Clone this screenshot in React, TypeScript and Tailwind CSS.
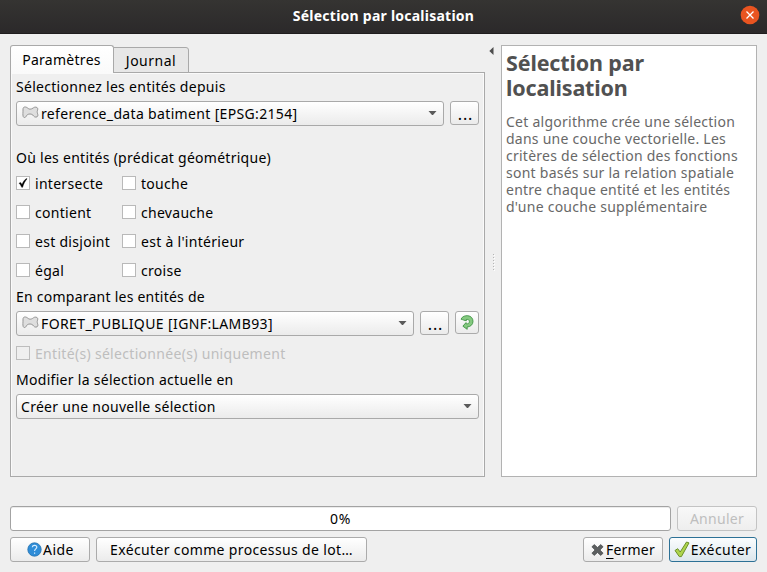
import type { ReactNode } from 'react';

const BTN =
  'flex items-center justify-center rounded-[3px] border border-[#ababab] bg-linear-to-b from-white to-[#ebebeb] whitespace-nowrap';

function Caret() {
  return (
    <svg width="9" height="6" viewBox="0 0 9 6" className="mb-px block shrink-0">
      <path d="M.5 1h8L5 5H4z" fill="#5b5b5b" />
    </svg>
  );
}

function Ellipsis() {
  return <span className="pt-px pl-[2px] text-[16px] tracking-[0.8px]">...</span>;
}

function PolygonIcon() {
  return (
    <svg width="17" height="13" viewBox="0 0 17 13" className="mr-[2px] mb-[2px] block shrink-0">
      <path
        d="M3.500 1C1.500.8.800 2 1 4c.1 2.500-.4 4.500.2 6.500.5 1.500 2.300 1.200 3-.2C4.800 8.700 6.200 8 8 8c1.700 0 2.700.7 3.600 2 1 1.500 3.700 1.500 4.200-.1.400-1.500-.7-2.600-.6-4.200.1-1.200.9-2.200.4-3.500C15 .9 12.800.8 11.600 1.700 10.300 2.700 9.300 3.200 8 3.200 6.200 3.200 5.500 1.200 3.500 1z"
        fill="#dedede"
        stroke="#959595"
      />
    </svg>
  );
}

function Combo({ width, icon, children }: { width: string; icon?: boolean; children: ReactNode }) {
  return (
    <div
      className={`flex h-[25px] items-center rounded-[3px] border border-[#a9a9a9] bg-linear-to-b from-white to-[#ebebeb] pr-[6px] ${icon ? 'pl-[5px]' : 'pl-[4px]'} ${width}`}
    >
      {icon && <PolygonIcon />}
      <span className="flex-1 whitespace-nowrap">{children}</span>
      <Caret />
    </div>
  );
}

function Check({ checked, disabled, children }: { checked?: boolean; disabled?: boolean; children: ReactNode }) {
  return (
    <div className={`flex h-[29px] items-start gap-[5px] pt-[5px] whitespace-nowrap ${disabled ? 'text-[#bebebe]' : ''}`}>
      <span
        className={`mt-[2px] flex h-[14px] w-[14px] shrink-0 items-center justify-center border ${disabled ? 'border-[#bdbdbd] bg-[#efefef]' : 'border-[#b9b9b9] bg-white'}`}
      >
        {checked && (
          <svg width="10" height="10" viewBox="0 0 10 10">
            <path d="M1 5.200 2.600 4.400 4 6.500C5 3.800 6.500 1.700 8.700.4L9 .9C7 3.200 5.500 6 4.600 9.300H3.700C3 7.500 2.200 6.200 1 5.200z" fill="#000" stroke="#000" strokeWidth=".4" />
          </svg>
        )}
      </span>
      <span>{children}</span>
    </div>
  );
}

export default function App() {
  return (
    <div className="flex h-[572px] w-[767px] flex-col overflow-hidden bg-[#efefef] font-['Noto_Sans',sans-serif] text-[14px] leading-[20px] tracking-[0.29px] text-black">
      <header className="grid h-[34px] shrink-0 grid-cols-[1fr_auto_1fr] items-center border-b border-[#1f1d1e] bg-linear-to-b from-[#353432] to-[#2b292a] text-white">
        <span />
        <h1 className="pb-[2px] font-bold tracking-[0.24px]">Sélection par localisation</h1>
        <svg width="20" height="20" viewBox="0 0 20 20" className="mr-[7px] -mt-[3px] justify-self-end">
          <circle cx="10" cy="10" r="9.300" fill="#e95420" />
          <path d="m6.500 6.500 7 7m0-7-7 7" stroke="#fff" strokeWidth="1.300" />
        </svg>
      </header>

      <div className="flex h-[443px] shrink-0 px-[10px] pt-[11px]">
        <section className="flex w-[475px] flex-col">
          <div className="z-10 -mb-px flex h-[28px] items-end">
            <div className="flex h-[28px] w-[104px] items-center justify-center rounded-t-[3px] border border-b-0 border-[#a9a9a9] bg-linear-to-b from-white to-[#fafafa] pt-px pr-px">
              Paramètres
            </div>
            <div className="-ml-px flex h-[26px] w-[76px] items-center justify-center rounded-tr-[3px] border border-[#a9a9a9] bg-[#e7e7e7] pt-px tracking-[0.5px]">
              Journal
            </div>
          </div>
          <div className="flex h-[405px] flex-col border border-[#a9a9a9] pr-[5px] pl-[5px] shadow-[inset_1px_1px_#fafafa,inset_-1px_0_#fafafa]">
            <div className="h-[28px] pt-[4px]">Sélectionnez les entités depuis</div>
            <div className="flex gap-[6px]">
              <Combo width="w-[428px] tracking-[0.34px]" icon>reference_data batiment [EPSG:2154]</Combo>
              <button className={`h-[24px] w-[29px] ${BTN}`}><Ellipsis /></button>
            </div>
            <div className="h-[43px] pt-[22px] tracking-[0.27px]">Où les entités (prédicat géométrique)</div>
            <div className="grid grid-cols-[106px_1fr]">
              <Check checked>intersecte</Check>
              <Check>touche</Check>
              <Check>contient</Check>
              <Check>chevauche</Check>
              <Check>est disjoint</Check>
              <Check>est à l'intérieur</Check>
              <Check>égal</Check>
              <Check>croise</Check>
            </div>
            <div className="h-[26px] pt-[2px] tracking-[0.24px]">En comparant les entités de</div>
            <div className="flex gap-[6px]">
              <Combo width="w-[398px] tracking-[0.39px]" icon>FORET_PUBLIQUE [IGNF:LAMB93]</Combo>
              <button className={`h-[24px] w-[29px] ${BTN}`}><Ellipsis /></button>
              <button className={`h-[23px] w-[24px] ${BTN}`}>
                <svg width="14" height="15" viewBox="0 0 14 15">
                  <path
                    d="M1 4.200C2.300 1.300 5.200.500 7.800.700 11 1 13 3.400 13 6.300c0 3.300-2.500 5.500-5.900 5.700l.1 2.300L2.900 11.200 6 7.600l.3 1.300c2 .1 3.100-.9 3.100-2.300 0-1.700-1.500-2.500-3.200-2.100l.2 1.200C4.600 5.700 2.700 4.500 1 4.200z"
                    fill="#85c980"
                    stroke="#3f9444"
                    strokeWidth=".9"
                    strokeLinejoin="round"
                  />
                </svg>
              </button>
            </div>
            <div className="h-[34px] pt-[3px] tracking-[0.31px]">
              <Check disabled>Entité(s) sélectionnée(s) uniquement</Check>
            </div>
            <div className="h-[24px]">Modifier la sélection actuelle en</div>
            <Combo width="w-[463px]">Créer une nouvelle sélection</Combo>
          </div>
        </section>

        <div className="flex w-[16px] shrink-0 flex-col items-center">
          <svg width="5" height="8" viewBox="0 0 5 8" className="mt-[2px] ml-[4px] self-start">
            <path d="M4.500 0v8L.3 4z" fill="#4d4d4d" />
          </svg>
          <div className="mt-[199px] flex flex-col gap-[2px]">
            {[0, 1, 2, 3, 4, 5].map((n) => (
              <i key={n} className="block h-px w-px bg-[#b5b5b5] shadow-[1px_1px_#fff]" />
            ))}
          </div>
        </div>

        <aside className="h-[432px] w-[256px] border border-[#b2b2b2] bg-white pl-[4px] pt-[4px] text-[#686868]">
          <h2 className="text-[21.500px] leading-[25px] font-bold tracking-[-0.15px] whitespace-nowrap text-[#515151]">
            Sélection par
            <br />
            localisation
          </h2>
          <p className="mt-[13px] leading-[17px] tracking-[0.25px] whitespace-nowrap">
            Cet algorithme crée une sélection
            <br />
            dans une couche vectorielle. Les
            <br />
            critères de sélection des fonctions
            <br />
            sont basés sur la relation spatiale
            <br />
            entre chaque entité et les entités
            <br />
            d'une couche supplémentaire
          </p>
        </aside>
      </div>

      <div className="mt-[29px] flex shrink-0 gap-[6px] px-[10px]">
        <div className="flex h-[25px] w-[661px] items-center justify-center rounded-[3px] border border-[#a3a3a3] bg-white tracking-[0.6px] shadow-[inset_0_1px_#ececec]">
          0%
        </div>
        <button className="flex h-[25px] w-[80px] items-center justify-center rounded-[3px] border border-[#c3c3c3] bg-linear-to-b from-[#f8f8f8] to-[#eeeeee] text-[#bebebe]">
          Annuler
        </button>
      </div>

      <footer className="mt-[6px] flex shrink-0 gap-[6px] px-[10px]">
        <button className={`h-[25px] w-[80px] gap-px pl-px tracking-[0.5px] ${BTN}`}>
          <svg width="15" height="15" viewBox="0 0 15 15">
            <circle cx="7.500" cy="7.500" r="6.700" fill="#2f8dd8" stroke="#2672ae" strokeWidth=".8" />
            <path d="M5.300 5.200c.3-2.500 4.700-2.400 4.500.1-.1 1.600-2.200 1.700-2.200 3.700m0 1.500v1.300" fill="none" stroke="#d8edff" strokeWidth="1.200" />
          </svg>
          Aide
        </button>
        <button className={`h-[25px] w-[271px] tracking-[0.36px] ${BTN}`}>Exécuter comme processus de lot…</button>
        <div className="flex-1" />
        <button className={`h-[25px] w-[80px] gap-[2px] tracking-[0.2px] ${BTN}`}>
          <svg width="13" height="12" viewBox="0 0 13 12">
            <path d="M3.300.6 6.500 3.500 9.700.6l2.400 2.200L9 6l3.100 3.200-2.400 2.200-3.200-2.900-3.200 2.900L.9 9.200 4 6 .9 2.800z" fill="#5c5f60" stroke="#46494a" strokeWidth=".7" />
          </svg>
          <span><span className="underline underline-offset-[3px]">F</span>ermer</span>
        </button>
        <button className="flex h-[25px] w-[88px] items-center justify-center gap-px rounded-[3px] border border-[#2d7196] bg-linear-to-b from-[#fbfdfe] to-[#dce6ec] pr-px tracking-[0.45px] whitespace-nowrap">
          <svg width="16" height="17" viewBox="0 0 16 17">
            <path d="M1 9.500 3.700 7.700 6.200 11 12.500 1l2.500.9L7.400 15.600H5.300z" fill="#aed44d" stroke="#6a9028" strokeLinejoin="round" />
          </svg>
          Exécuter
        </button>
      </footer>
    </div>
  );
}
